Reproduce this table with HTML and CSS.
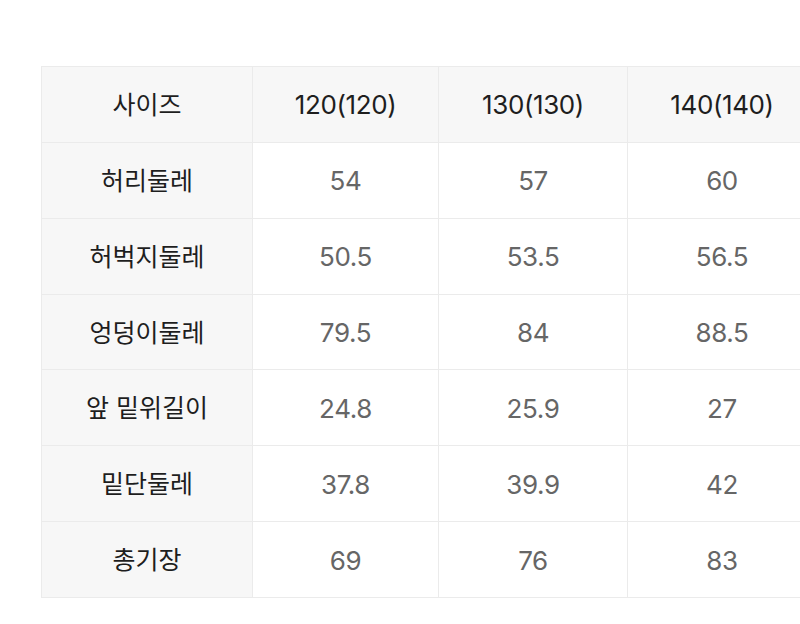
FILE: index.html
```html
<!DOCTYPE html>
<html lang="ko">
<head>
<meta charset="utf-8">
<link rel="stylesheet" href="styles.css">
</head>
<body>
<div class="page">
  <table class="size-table">
    <colgroup>
      <col class="col-label">
      <col class="col-a">
      <col class="col-b">
      <col class="col-c">
    </colgroup>
    <thead>
      <tr>
        <th class="label">사이즈</th>
        <th>120(120)</th>
        <th>130(130)</th>
        <th>140(140)</th>
      </tr>
    </thead>
    <tbody>
      <tr><th class="label">허리둘레</th><td>54</td><td>57</td><td>60</td></tr>
      <tr><th class="label">허벅지둘레</th><td>50.5</td><td>53.5</td><td>56.5</td></tr>
      <tr><th class="label">엉덩이둘레</th><td>79.5</td><td>84</td><td>88.5</td></tr>
      <tr><th class="label">앞 밑위길이</th><td>24.8</td><td>25.9</td><td>27</td></tr>
      <tr><th class="label">밑단둘레</th><td>37.8</td><td>39.9</td><td>42</td></tr>
      <tr><th class="label">총기장</th><td>69</td><td>76</td><td>83</td></tr>
    </tbody>
  </table>
</div>
</body>
</html>
```
FILE: styles.css
```css
html, body {
  margin: 0;
  padding: 0;
  background: #ffffff;
  overflow: hidden;
}
.page {
  padding: 66px 0 0 41px;
  width: 900px;
  font-family: "Inter", "Noto Sans CJK KR", "Noto Sans", sans-serif;
}
.size-table {
  border-collapse: collapse;
  table-layout: fixed;
  width: 775px;
}
.col-label { width: 211px; }
.col-a { width: 186px; }
.col-b { width: 189px; }
.col-c { width: 189px; }
.size-table th,
.size-table td {
  border: 1px solid #ebebeb;
  height: 72.86px;
  padding: 2px 0 0;
  text-align: center;
  vertical-align: middle;
  font-size: 26px;
  font-weight: 400;
  letter-spacing: -0.4px;
  line-height: 1;
}
.size-table th.label {
  font-family: "Noto Sans CJK KR", sans-serif;
  font-size: 25px;
  letter-spacing: 0;
  padding: 0 0 2px;
}
.size-table thead th {
  background: #f7f7f7;
  color: #1e1e1e;
}
.size-table th.label {
  background: #f7f7f7;
  color: #1e1e1e;
}
.size-table td {
  background: #ffffff;
  color: #666666;
}
```
